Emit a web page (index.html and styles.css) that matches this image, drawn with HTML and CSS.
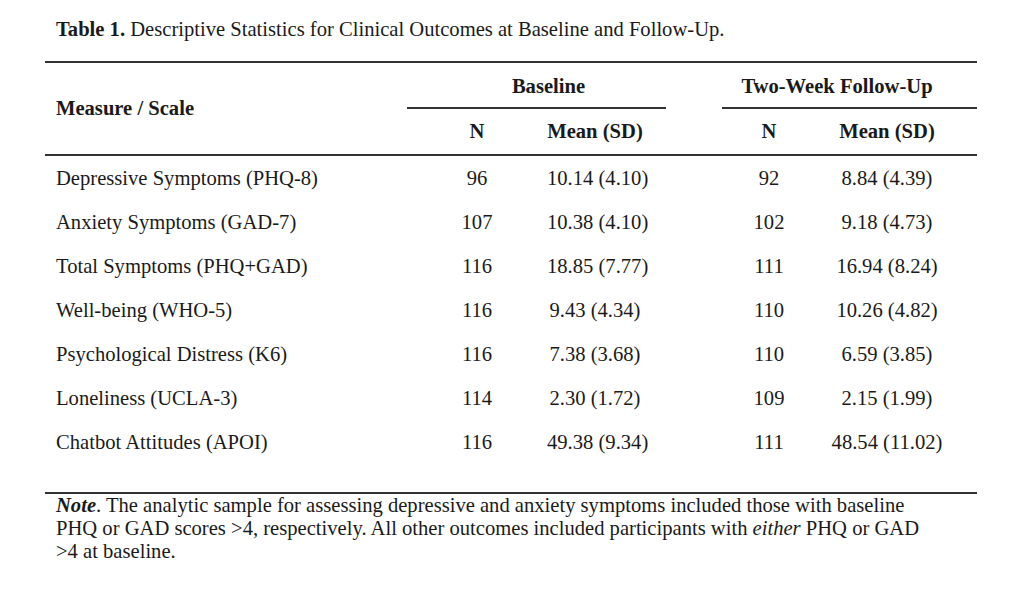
FILE: index.html
```html
<!DOCTYPE html>
<html lang="en">
<head>
<meta charset="utf-8">
<title>Table 1</title>
<link rel="stylesheet" href="styles.css">
</head>
<body>
<div class="page">
  <p class="caption"><b>Table 1.</b> Descriptive Statistics for Clinical Outcomes at Baseline and Follow-Up.</p>
  <div class="table">
    <div class="head">
      <div class="measure">Measure / Scale</div>
      <div class="span span-base">Baseline</div>
      <div class="span span-follow">Two-Week Follow-Up</div>
      <div class="sub c2">N</div>
      <div class="sub c3">Mean (SD)</div>
      <div class="sub c5">N</div>
      <div class="sub c6">Mean (SD)</div>
    </div>
    <div class="body">
      <div class="row"><div class="label">Depressive Symptoms (PHQ-8)</div><div class="num">96</div><div class="num">10.14 (4.10)</div><div></div><div class="num">92</div><div class="num">8.84 (4.39)</div><div></div></div>
      <div class="row"><div class="label">Anxiety Symptoms (GAD-7)</div><div class="num">107</div><div class="num">10.38 (4.10)</div><div></div><div class="num">102</div><div class="num">9.18 (4.73)</div><div></div></div>
      <div class="row"><div class="label">Total Symptoms (PHQ+GAD)</div><div class="num">116</div><div class="num">18.85 (7.77)</div><div></div><div class="num">111</div><div class="num">16.94 (8.24)</div><div></div></div>
      <div class="row"><div class="label">Well-being (WHO-5)</div><div class="num">116</div><div class="num">9.43 (4.34)</div><div></div><div class="num">110</div><div class="num">10.26 (4.82)</div><div></div></div>
      <div class="row"><div class="label">Psychological Distress (K6)</div><div class="num">116</div><div class="num">7.38 (3.68)</div><div></div><div class="num">110</div><div class="num">6.59 (3.85)</div><div></div></div>
      <div class="row"><div class="label">Loneliness (UCLA-3)</div><div class="num">114</div><div class="num">2.30 (1.72)</div><div></div><div class="num">109</div><div class="num">2.15 (1.99)</div><div></div></div>
      <div class="row"><div class="label">Chatbot Attitudes (APOI)</div><div class="num">116</div><div class="num">49.38 (9.34)</div><div></div><div class="num">111</div><div class="num">48.54 (11.02)</div><div></div></div>
    </div>
    <p class="note"><b><i>Note</i></b>. The analytic sample for assessing depressive and anxiety symptoms included those with baseline PHQ or GAD scores &gt;4, respectively. All other outcomes included participants with <i>either</i> PHQ or GAD &gt;4 at baseline.</p>
  </div>
</div>
</body>
</html>
```
FILE: styles.css
```css
* { box-sizing: border-box; }
html, body { margin: 0; padding: 0; background: #fff; }
body {
  font-family: "Liberation Serif", "Times New Roman", serif;
  color: #1a1a1a;
  font-size: 20.6px;
}
.page {
  width: 1022px;
  height: 596px;
  padding: 17px 45px 0 45px;
}
.caption {
  margin: 0;
  padding-left: 11px;
  font-size: 20.6px;
  line-height: 24px;
  height: 44px;
}
.table {
  border-top: 2px solid #333;
}
.head, .row {
  display: grid;
  grid-template-columns: 362px 140px 96px 79px 94px 142px 19px;
}
.head {
  grid-template-rows: 46px 45px;
  border-bottom: 2px solid #333;
  font-weight: bold;
}
.measure {
  grid-column: 1;
  grid-row: 1 / 3;
  align-self: center;
  padding-left: 11px;
}
.span {
  grid-row: 1;
  display: flex;
  align-items: center;
  justify-content: center;
  border-bottom: 2px solid #333;
  padding-top: 2px;
  white-space: nowrap;
}
.span-base {
  grid-column: 2 / 5;
  margin-right: 56px;
  padding-left: 24px;
}
.span-follow {
  grid-column: 5 / 8;
  padding-right: 25px;
}
.sub {
  grid-row: 2;
  display: flex;
  align-items: center;
  justify-content: center;
  white-space: nowrap;
}
.c2 { grid-column: 2; }
.c3 { grid-column: 3; }
.c5 { grid-column: 5; }
.c6 { grid-column: 6; }
.body {
  padding-top: 0;
  padding-bottom: 28px;
  border-bottom: 2px solid #333;
}
.row {
  height: 44px;
  align-items: center;
}
.label { padding-left: 11px; white-space: nowrap; }
.num { text-align: center; white-space: nowrap; }
.note {
  margin: 0;
  padding: 0 42px 0 11px;
  line-height: 23px;
}
```
